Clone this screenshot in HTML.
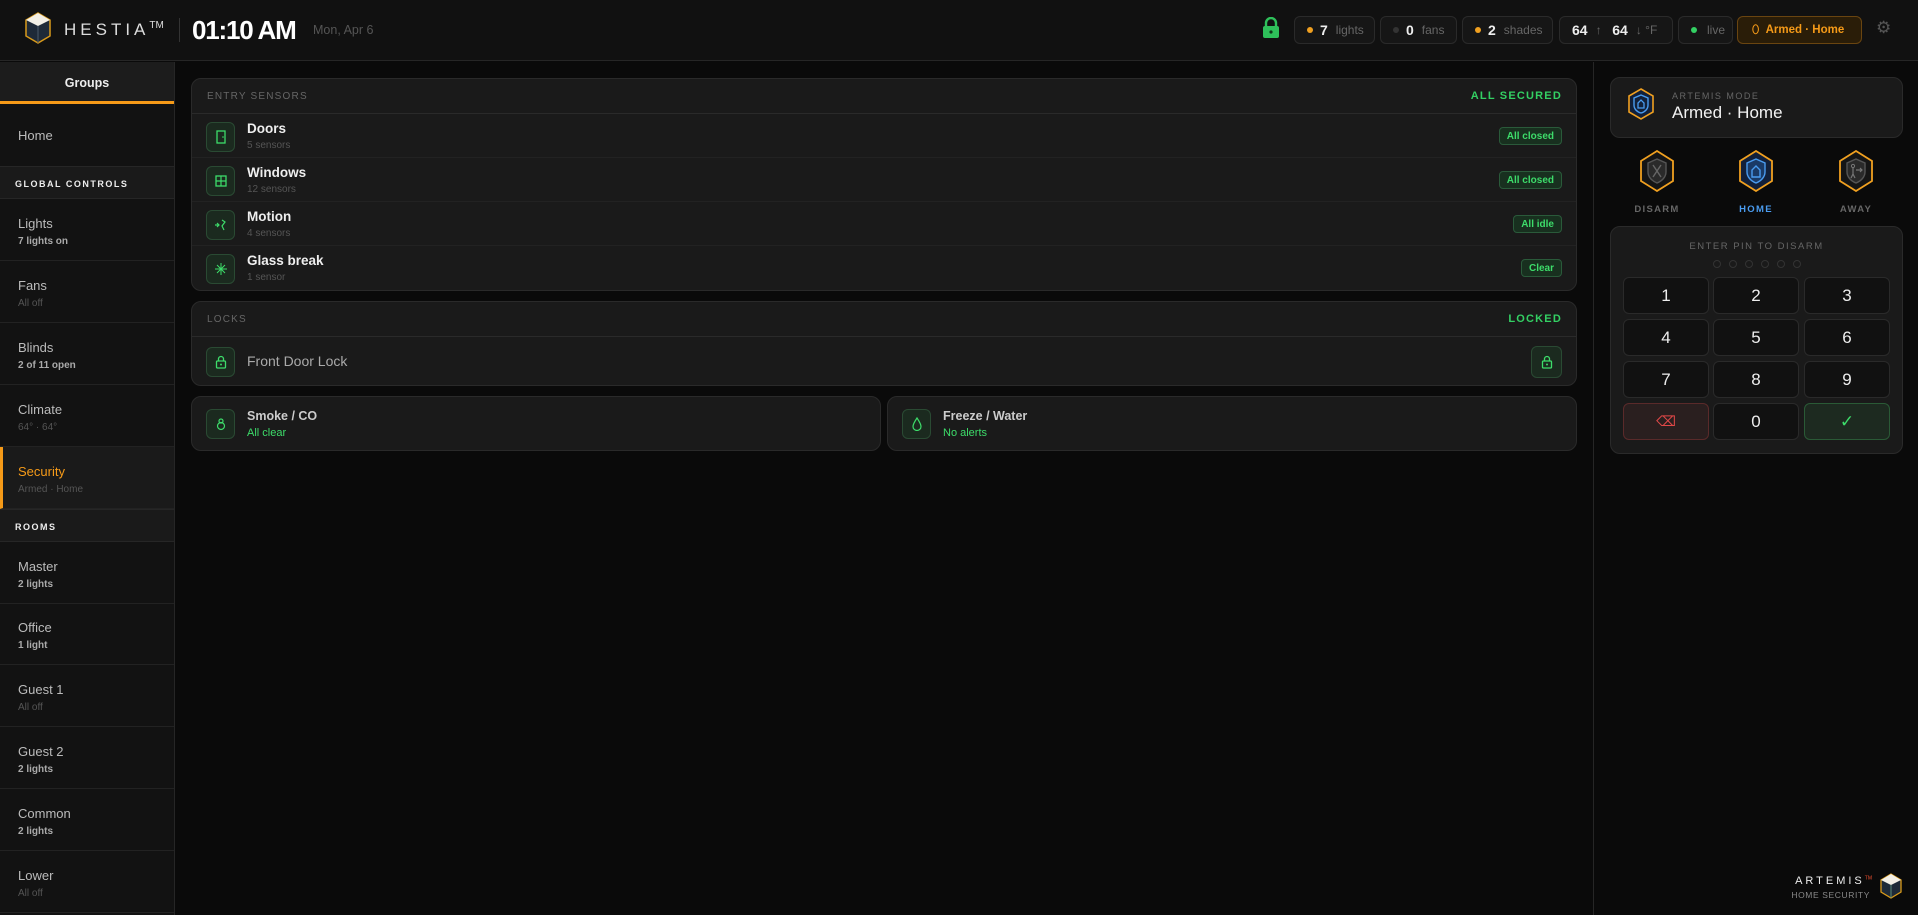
<!DOCTYPE html>
<html><head><meta charset="utf-8"><style>
*{box-sizing:border-box;margin:0;padding:0}
body{width:1918px;height:915px;background:#0a0a0a;font-family:"Liberation Sans",sans-serif;color:#ddd;position:relative;overflow:hidden}
.abs{position:absolute}
.hdr{left:0;top:0;width:1918px;height:61px;background:#111;border-bottom:1px solid #262626}
.chip{position:absolute;top:16px;height:28px;border:1px solid #2a2a2a;background:#161616;border-radius:6px;font-size:12px;color:#666;display:flex;align-items:center;padding-left:12px}
.chip b{color:#eee;font-size:14px;margin-right:8px}
.dot{width:6px;height:6px;border-radius:50%;display:inline-block;margin-right:7px}
.side{left:0;top:62px;width:175px;height:853px;background:#121212;border-right:1px solid #262626}
.item{position:absolute;left:0;width:174px;height:62px;border-bottom:1px solid #222;padding:17px 0 0 18px}
.item .t{font-size:13px;color:#bbb}
.item .s{font-size:10px;color:#aaa;margin-top:5px;font-weight:bold}
.item .s.g{color:#555;font-weight:normal}
.sec{position:absolute;left:0;width:174px;height:33px;background:#1a1a1a;border-bottom:1px solid #262626;border-top:1px solid #262626;font-size:9px;font-weight:bold;letter-spacing:1.5px;color:#eee;padding:12px 0 0 15px}
.card{position:absolute;background:#1a1a1a;border:1px solid #2a2a2a;border-radius:10px}
.ch{position:absolute;left:0;right:0;top:0;height:35px;border-bottom:1px solid #2a2a2a;font-size:10px;letter-spacing:1.2px;color:#666;padding:12px 0 0 15px}
.ch span{position:absolute;right:14px;top:11px;color:#33d063;font-weight:bold;font-size:11px}
.row{position:absolute;left:0;right:0;height:44px;border-bottom:1px solid #222}
.ic{position:absolute;left:14px;top:8px;width:29px;height:30px;border:1px solid #2a4a33;background:#1b2a1f;border-radius:6px;display:flex;align-items:center;justify-content:center}
.nm{position:absolute;left:55px;top:7px;font-size:13.5px;font-weight:bold;color:#eee}
.sb{position:absolute;left:55px;top:26px;font-size:10px;color:#555}
.pill{position:absolute;right:14px;top:13px;height:18px;border:1px solid #2a5a3a;background:#18301f;border-radius:4px;color:#3ddc6a;font-size:10px;font-weight:bold;padding:3px 7px 0}
.key{position:absolute;width:86px;height:37px;background:#111;border:1px solid #2a2a2a;border-radius:6px;color:#eee;font-size:17px;text-align:center;line-height:35px}
.pd{display:inline-block;width:8px;height:8px;border-radius:50%;border:1px solid #333;margin:0 4px}
.ml{position:absolute;top:204px;font-size:9.5px;font-weight:bold;letter-spacing:1.3px;color:#666;text-align:center;width:80px}
</style></head><body>
<div class="abs hdr">
  <svg class="abs" style="left:24px;top:12px" width="28" height="32" viewBox="0 0 28 32"><path d="M14 1 L26 8 V24 L14 31 L2 24 V8Z" fill="#1e2a38" stroke="#d99a1a" stroke-width="1.5"/><path d="M14 1 L26 8 L14 14 L2 8Z" fill="#f2efe6"/><path d="M14 14 V31" stroke="#4b5a6a"/></svg>
  <div class="abs" style="left:64px;top:20px;font-size:17px;letter-spacing:4px;color:#ddd">HESTIA<span style="font-size:10px;letter-spacing:0;vertical-align:top">TM</span></div>
  <div class="abs" style="left:179px;top:18px;width:1px;height:24px;background:#333"></div>
  <div class="abs" style="left:192px;top:15px;font-size:26px;font-weight:bold;color:#fff;letter-spacing:-1.2px">01:10 AM</div>
  <div class="abs" style="left:313px;top:23px;font-size:12.5px;color:#555">Mon, Apr 6</div>
  <svg class="abs" style="left:1262px;top:17px" width="18" height="22" viewBox="0 0 18 22"><path d="M4 10V6a5 5 0 0 1 10 0v4" fill="none" stroke="#2ec05a" stroke-width="2.4"/><rect x="1" y="9" width="16" height="12" rx="2" fill="#2ec05a"/><circle cx="9" cy="15" r="1.6" fill="#0e3a1a"/></svg>
  <div class="chip" style="left:1294px;width:81px"><span class="dot" style="background:#f0a020"></span><b>7</b>lights</div>
  <div class="chip" style="left:1380px;width:77px"><span class="dot" style="background:#333"></span><b>0</b>fans</div>
  <div class="chip" style="left:1462px;width:91px"><span class="dot" style="background:#f0a020"></span><b>2</b>shades</div>
  <div class="chip" style="left:1559px;width:114px"><b>64</b>↑&nbsp;&nbsp;<b style="margin-left:4px">64</b>↓ °F</div>
  <div class="chip" style="left:1678px;width:55px"><span class="dot" style="background:#33d063;margin-right:10px"></span>live</div>
  <div class="chip" style="left:1737px;width:125px;background:#2a1d08;border-color:#6a4510;color:#f59a18;font-weight:bold;font-size:11.5px;padding-left:14px">⬯&nbsp;&nbsp;Armed · Home</div>
  <div class="abs" style="left:1876px;top:18px;font-size:17px;color:#555">⚙</div>
</div>

<div class="abs side">
  <div class="abs" style="left:0;top:0;width:174px;height:42px;background:#1c1c1c;border-bottom:3px solid #f59a18;text-align:center;padding-top:14px;font-size:12.5px;font-weight:bold;color:#eee">Groups</div>
  <div class="item" style="top:42px;border:none;padding-top:24px"><div class="t">Home</div></div>
  <div class="sec" style="top:104px">GLOBAL CONTROLS</div>
  <div class="item" style="top:137px"><div class="t">Lights</div><div class="s">7 lights on</div></div>
  <div class="item" style="top:199px"><div class="t">Fans</div><div class="s g">All off</div></div>
  <div class="item" style="top:261px"><div class="t">Blinds</div><div class="s">2 of 11 open</div></div>
  <div class="item" style="top:323px"><div class="t">Climate</div><div class="s g">64° · 64°</div></div>
  <div class="item" style="top:385px;background:#1a1a1a;border-left:3px solid #f59a18;padding-left:15px"><div class="t" style="color:#f59a18">Security</div><div class="s g">Armed · Home</div></div>
  <div class="sec" style="top:447px">ROOMS</div>
  <div class="item" style="top:480px"><div class="t">Master</div><div class="s">2 lights</div></div>
  <div class="item" style="top:541px"><div class="t">Office</div><div class="s">1 light</div></div>
  <div class="item" style="top:603px"><div class="t">Guest 1</div><div class="s g">All off</div></div>
  <div class="item" style="top:665px"><div class="t">Guest 2</div><div class="s">2 lights</div></div>
  <div class="item" style="top:727px"><div class="t">Common</div><div class="s">2 lights</div></div>
  <div class="item" style="top:789px"><div class="t">Lower</div><div class="s g">All off</div></div>
</div>

<div class="card" style="left:191px;top:78px;width:1386px;height:213px">
  <div class="ch">ENTRY SENSORS<span>ALL SECURED</span></div>
  <div class="row" style="top:35px"><div class="ic"><svg width="12" height="14"><rect x="2" y="1" width="8" height="12" fill="none" stroke="#3ddc6a" stroke-width="1.3"/><circle cx="8" cy="7" r=".8" fill="#3ddc6a"/></svg></div><div class="nm">Doors</div><div class="sb">5 sensors</div><div class="pill">All closed</div></div>
  <div class="row" style="top:79px"><div class="ic"><svg width="12" height="12"><rect x="1" y="1" width="10" height="10" fill="none" stroke="#3ddc6a" stroke-width="1.3"/><path d="M6 1V11M1 6H11" stroke="#3ddc6a" stroke-width="1.2"/></svg></div><div class="nm">Windows</div><div class="sb">12 sensors</div><div class="pill">All closed</div></div>
  <div class="row" style="top:123px"><div class="ic"><svg width="14" height="12"><path d="M1 6H5M3 4L5 6 3 8M8 1L11 3 8 7 10 11" fill="none" stroke="#3ddc6a" stroke-width="1.2"/></svg></div><div class="nm">Motion</div><div class="sb">4 sensors</div><div class="pill">All idle</div></div>
  <div class="row" style="top:167px;border:none"><div class="ic"><svg width="12" height="12"><path d="M6 0V12M0 6H12M2 2L10 10M10 2L2 10" stroke="#3ddc6a" stroke-width="1"/></svg></div><div class="nm">Glass break</div><div class="sb">1 sensor</div><div class="pill">Clear</div></div>
</div>

<div class="card" style="left:191px;top:301px;width:1386px;height:85px">
  <div class="ch">LOCKS<span>LOCKED</span></div>
  <div class="row" style="top:35px;border:none;height:49px"><div class="ic" style="top:10px"><svg width="12" height="14"><path d="M3.5 6V4a2.5 2.5 0 0 1 5 0v2" fill="none" stroke="#3ddc6a" stroke-width="1.3"/><rect x="1.5" y="6" width="9" height="7" rx="1" fill="none" stroke="#3ddc6a" stroke-width="1.3"/><circle cx="6" cy="9.5" r="1" fill="#3ddc6a"/></svg></div><div class="nm" style="top:16px;font-weight:normal;color:#aaa;font-size:14px">Front Door Lock</div>
  <div class="ic" style="left:auto;right:14px;top:9px;width:31px;height:32px"><svg width="12" height="14"><path d="M3.5 6V4a2.5 2.5 0 0 1 5 0v2" fill="none" stroke="#3ddc6a" stroke-width="1.3"/><rect x="1.5" y="6" width="9" height="7" rx="1" fill="none" stroke="#3ddc6a" stroke-width="1.3"/><circle cx="6" cy="9.5" r="1" fill="#3ddc6a"/></svg></div></div>
</div>

<div class="card" style="left:191px;top:396px;width:690px;height:55px">
  <div class="ic" style="top:12px"><svg width="10" height="14"><circle cx="5" cy="9" r="3.5" fill="none" stroke="#3ddc6a" stroke-width="1.2"/><circle cx="5" cy="4" r="2" fill="none" stroke="#3ddc6a" stroke-width="1.2"/></svg></div>
  <div class="nm" style="top:12px;font-size:12.5px;color:#ccc">Smoke / CO</div><div class="sb" style="top:30px;color:#3ddc6a;font-size:11px">All clear</div>
</div>
<div class="card" style="left:887px;top:396px;width:690px;height:55px">
  <div class="ic" style="top:12px"><svg width="10" height="14"><path d="M5 1C5 1 1 7 1 9.5a4 4 0 0 0 8 0C9 7 5 1 5 1Z" fill="none" stroke="#3ddc6a" stroke-width="1.2"/></svg></div>
  <div class="nm" style="top:12px;font-size:12.5px;color:#ccc">Freeze / Water</div><div class="sb" style="top:30px;color:#3ddc6a;font-size:11px">No alerts</div>
</div>

<div class="abs" style="left:1593px;top:62px;width:1px;height:853px;background:#262626"></div>
<div class="card" style="left:1610px;top:77px;width:293px;height:61px">
  <svg class="abs" style="left:16px;top:10px" width="28" height="32" viewBox="0 0 28 32"><path d="M14 1 L26 8 V24 L14 31 L2 24 V8Z" fill="#12203a" stroke="#f0a020" stroke-width="1.6"/><path d="M14 7 L21 10 V17 C21 21 18 24 14 25 C10 24 7 21 7 17 V10Z" fill="none" stroke="#4a9cf0" stroke-width="1.4"/><path d="M11 20V15L14 12 17 15V20Z" fill="none" stroke="#4a9cf0" stroke-width="1.3"/></svg>
  <div class="abs" style="left:61px;top:13px;font-size:9px;letter-spacing:1.5px;color:#666">ARTEMIS MODE</div>
  <div class="abs" style="left:61px;top:25px;font-size:17px;color:#f2f2f2">Armed · Home</div>
</div>
<svg class="abs" style="left:1639px;top:150px" width="36" height="42" viewBox="0 0 36 42"><path d="M18 1 L34 11 V31 L18 41 L2 31 V11Z" fill="#151515" stroke="#f0a020" stroke-width="1.8"/><path d="M18 9 L27 13 V22 C27 27 23 31 18 33 C13 31 9 27 9 22 V13Z" fill="#2a2a2a" stroke="#555" stroke-width="1.4"/><path d="M14 15 L22 27 M22 15 L14 27" stroke="#666" stroke-width="1.4"/></svg>
<svg class="abs" style="left:1738px;top:150px" width="36" height="42" viewBox="0 0 36 42"><path d="M18 1 L34 11 V31 L18 41 L2 31 V11Z" fill="#12203a" stroke="#f0a020" stroke-width="1.8"/><path d="M18 9 L27 13 V22 C27 27 23 31 18 33 C13 31 9 27 9 22 V13Z" fill="#1a3a66" stroke="#4a9cf0" stroke-width="1.4"/><path d="M14 27V20L18 16 22 20V27Z" fill="none" stroke="#4a9cf0" stroke-width="1.4"/></svg>
<svg class="abs" style="left:1838px;top:150px" width="36" height="42" viewBox="0 0 36 42"><path d="M18 1 L34 11 V31 L18 41 L2 31 V11Z" fill="#151515" stroke="#f0a020" stroke-width="1.8"/><path d="M18 9 L27 13 V22 C27 27 23 31 18 33 C13 31 9 27 9 22 V13Z" fill="#2a2a2a" stroke="#555" stroke-width="1.4"/><circle cx="15" cy="16" r="1.6" fill="none" stroke="#777"/><path d="M15 18V24L13 28M15 24L17 28M18 20H24M22 18L24 20 22 22" fill="none" stroke="#777" stroke-width="1.2"/></svg>
<div class="ml" style="left:1617px">DISARM</div>
<div class="ml" style="left:1716px;color:#4a9cf0">HOME</div>
<div class="ml" style="left:1816px">AWAY</div>

<div class="card" style="left:1610px;top:226px;width:293px;height:228px">
  <div class="abs" style="left:0;right:0;top:14px;text-align:center;font-size:9.5px;letter-spacing:1.5px;color:#666">ENTER PIN TO DISARM</div>
  <div class="abs" style="left:0;right:0;top:33px;text-align:center;line-height:8px"><span class="pd"></span><span class="pd"></span><span class="pd"></span><span class="pd"></span><span class="pd"></span><span class="pd"></span></div>
</div>
<div class="key" style="left:1623px;top:277px">1</div><div class="key" style="left:1713px;top:277px">2</div><div class="key" style="left:1804px;top:277px">3</div>
<div class="key" style="left:1623px;top:319px">4</div><div class="key" style="left:1713px;top:319px">5</div><div class="key" style="left:1804px;top:319px">6</div>
<div class="key" style="left:1623px;top:361px">7</div><div class="key" style="left:1713px;top:361px">8</div><div class="key" style="left:1804px;top:361px">9</div>
<div class="key" style="left:1623px;top:403px;background:#2a1f1f;border-color:#5a2a2a;color:#e04848;font-size:14px">⌫</div>
<div class="key" style="left:1713px;top:403px">0</div>
<div class="key" style="left:1804px;top:403px;background:#1d2a20;border-color:#2a5a36;color:#3ddc6a">✓</div>

<div class="abs" style="left:1780px;top:875px;width:92px;text-align:right;font-size:11px;letter-spacing:3px;color:#eee">ARTEMIS<sup style="font-size:5px;color:#f05030;letter-spacing:0">TM</sup></div>
<div class="abs" style="left:1780px;top:890px;width:90px;text-align:right;font-size:8.5px;letter-spacing:.6px;color:#888">HOME SECURITY</div>
<svg class="abs" style="left:1880px;top:873px" width="22" height="26" viewBox="0 0 22 26"><path d="M11 1 L21 7 V19 L11 25 L1 19 V7Z" fill="#1e2a38" stroke="#d99a1a" stroke-width="1.3"/><path d="M11 1 L21 7 L11 12 L1 7Z" fill="#f2efe6"/><path d="M11 12V25" stroke="#5a8a7a"/></svg>
</body></html>
